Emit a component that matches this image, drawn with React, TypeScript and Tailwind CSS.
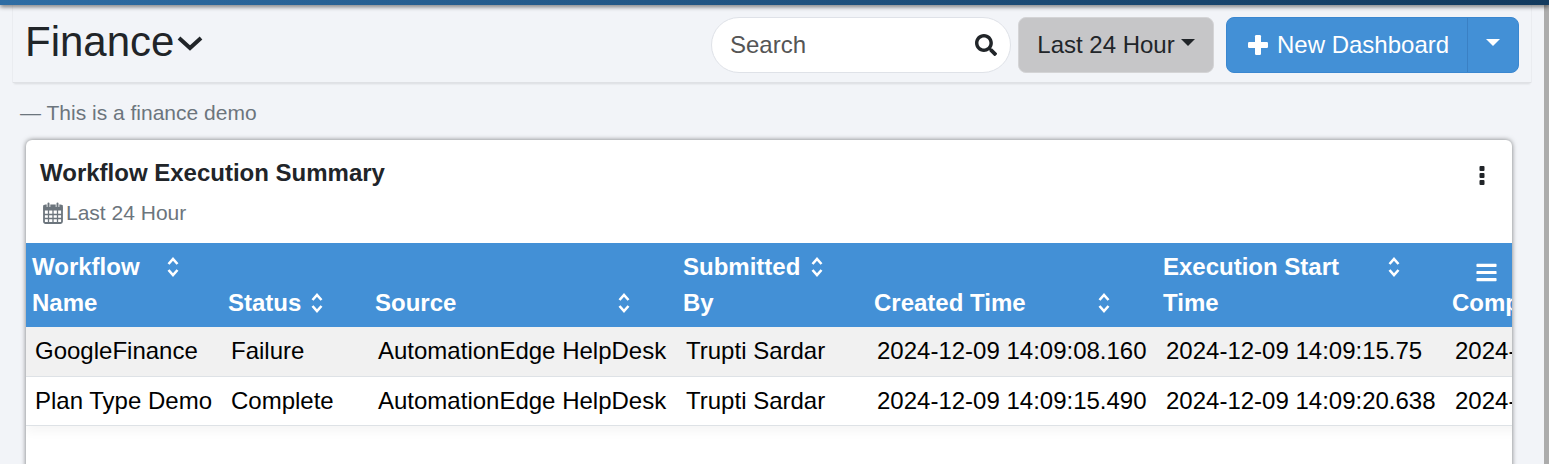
import { FaBars, FaSearch } from "react-icons/fa";

const SortIcon = () => (
  <svg viewBox="0 0 14 22" className="h-[22px] w-[14px] shrink-0" fill="none" stroke="currentColor" strokeWidth="2.6">
    <polyline points="2.5,8 7,3 11.5,8" />
    <polyline points="2.5,14 7,19 11.5,14" />
  </svg>
);

const CalendarIcon = () => (
  <svg viewBox="0 0 20 22" className="h-[22px] w-[20px] shrink-0 text-[#6c757d]" fill="none" stroke="currentColor">
    <rect x="1" y="3.5" width="18" height="17.5" rx="1.5" strokeWidth="1.8" />
    <rect x="1" y="3.5" width="18" height="4.5" fill="currentColor" strokeWidth="1" />
    <path d="M1 12.5h18M1 16.5h18M5.5 8v13M10 8v13M14.5 8v13" strokeWidth="1.3" />
    <path d="M5.5 1.5v3.5M14.5 1.5v3.5" stroke="white" strokeWidth="3.6" />
    <path d="M5.5 1.5v3.5M14.5 1.5v3.5" strokeWidth="2" strokeLinecap="round" />
  </svg>
);

const KebabIcon = () => (
  <svg viewBox="0 0 6 19" className="mt-[8px] h-[19px] w-[6px]" fill="#212529">
    <rect x="0.5" y="0" width="5" height="5" rx="1" />
    <rect x="0.5" y="7" width="5" height="5" rx="1" />
    <rect x="0.5" y="14" width="5" height="5" rx="1" />
  </svg>
);

const PlusIcon = () => (
  <svg viewBox="0 0 20 20" className="h-[20px] w-[20px] shrink-0" fill="currentColor">
    <rect x="7" y="0" width="6" height="20" rx="1.2" />
    <rect x="0" y="7" width="20" height="6" rx="1.2" />
  </svg>
);

const Caret = () => (
  <span className="h-0 w-0 border-x-[7px] border-t-[7px] border-x-transparent border-t-current" />
);

const HeadCell = ({ label, iconLeft, topIcon }: { label: string[]; iconLeft: string; topIcon?: boolean }) => (
  <th className="h-[84px] px-[6px] pb-[6px] align-bottom text-left font-bold text-white">
    {label.length > 1 ? (
      <div className="leading-[36px]">
        <div className="flex items-center">
          <span className={iconLeft}>{label[0]}</span>
          {topIcon && <SortIcon />}
        </div>
        <div>{label[1]}</div>
      </div>
    ) : (
      <div className="flex items-center leading-[36px]">
        <span className={iconLeft}>{label[0]}</span>
        <SortIcon />
      </div>
    )}
  </th>
);

const rows = [
  ["GoogleFinance", "Failure", "AutomationEdge HelpDesk", "Trupti Sardar", "2024-12-09 14:09:08.160", "2024-12-09 14:09:15.75", "2024-12-09 14:09:20.100"],
  ["Plan Type Demo", "Complete", "AutomationEdge HelpDesk", "Trupti Sardar", "2024-12-09 14:09:15.490", "2024-12-09 14:09:20.638", "2024-12-09 14:09:25.200"],
];

export default function App() {
  return (
    <div className="h-[464px] w-[1549px] overflow-hidden bg-[#f2f4f8] font-['Liberation_Sans',Arial,sans-serif] text-[#212529]">
      <div className="relative z-10 h-[5px] bg-gradient-to-r from-[#2e6da4] to-[#123a5e] shadow-[0_2px_4px_rgba(0,0,0,0.5)]" />

      <div className="flex">
        <div className="w-[1544px] shrink-0">
          <div className="mx-[13px] w-[1518px]">
            <div className="flex h-[78px] items-start justify-between border-b border-[#dfe1e5] pr-[12px] shadow-[0_2px_2px_-1px_rgba(0,0,0,0.1),-1px_0_0_#ebedf1,1px_0_0_#ebedf1]">
              <div className="mt-[12px] flex items-center pl-[12px]">
                <h1 className="text-[42px] leading-[50px]">Finance</h1>
                <svg viewBox="0 0 26 16" className="mt-[1px] ml-[3px] h-[16px] w-[26px]" fill="none" stroke="currentColor" strokeWidth="4">
                  <polyline points="2,3 13,13 24,3" />
                </svg>
              </div>

              <div className="mt-[12px] flex items-center">
                <div className="flex h-[56px] w-[300px] items-center justify-between rounded-[28px] border border-[#dfe2e8] bg-white pr-[13px] pl-[18px]">
                  <span className="text-[24px] text-[#555]">Search</span>
                  <FaSearch className="text-[22px] text-[#212529]" />
                </div>
                <button className="ml-[7px] flex h-[56px] w-[196px] items-center justify-center gap-[6px] rounded-[8px] border border-[#d4d4d6] bg-[#c6c6c8] text-[24px]">
                  Last 24 Hour
                  <span className="mb-[6px] flex"><Caret /></span>
                </button>
                <div className="ml-[12px] flex h-[56px] w-[293px] overflow-hidden rounded-[8px] border border-[#3a87d0] bg-[#4390d6] text-white">
                  <div className="flex w-[240px] items-center gap-[9px] pl-[21px] text-[24px]">
                    <PlusIcon />
                    New Dashboard
                  </div>
                  <div className="flex flex-1 items-center justify-center border-l border-[#3a80c4]">
                    <span className="mb-[6px] flex"><Caret /></span>
                  </div>
                </div>
              </div>
            </div>

            <p className="mt-[17px] ml-[7px] text-[21px] leading-[26px] text-[#6c757d]">— This is a finance demo</p>
          </div>

          <div className="mt-[14px] ml-[26px] h-[340px] w-[1486px] overflow-hidden rounded-t-[6px] bg-white shadow-[0_0_5px_rgba(0,0,0,0.5)]">
            <div className="flex h-[103px] justify-between pt-[18px] pr-[27px] pl-[14px]">
              <div>
                <h2 className="text-[24px] leading-[30px] font-bold">Workflow Execution Summary</h2>
                <div className="mt-[13px] flex items-center gap-[3px] pl-[3px] text-[21px] leading-[24px] text-[#6c757d]">
                  <CalendarIcon />
                  Last 24 Hour
                </div>
              </div>
              <KebabIcon />
            </div>

            <div className="relative h-[240px] overflow-hidden">
              <table className="w-[1640px] table-fixed border-collapse text-[24px] shadow-[0_6px_10px_rgba(0,0,0,0.04)]">
                <colgroup>
                  <col className="w-[196px]" />
                  <col className="w-[147px]" />
                  <col className="w-[308px]" />
                  <col className="w-[191px]" />
                  <col className="w-[289px]" />
                  <col className="w-[289px]" />
                  <col className="w-[220px]" />
                </colgroup>
                <thead className="bg-[#4390d6]">
                  <tr>
                    <HeadCell label={["Workflow", "Name"]} iconLeft="w-[134px]" topIcon />
                    <HeadCell label={["Status"]} iconLeft="w-[82px]" />
                    <HeadCell label={["Source"]} iconLeft="w-[242px]" />
                    <HeadCell label={["Submitted", "By"]} iconLeft="w-[127px]" topIcon />
                    <HeadCell label={["Created Time"]} iconLeft="w-[223px]" />
                    <HeadCell label={["Execution Start", "Time"]} iconLeft="w-[224px]" topIcon />
                    <th className="h-[84px] px-[6px] pb-[6px] align-bottom text-left font-bold whitespace-nowrap text-white">
                      <div className="leading-[36px]">Completed Time</div>
                    </th>
                  </tr>
                </thead>
                <tbody className="text-black">
                  {rows.map((row, i) => (
                    <tr key={row[0]} className={`h-[49px] border-b border-[#dee2e6] ${i === 0 ? "bg-[#f1f1f1]" : "bg-white"}`}>
                      {row.map((cell, j) => (
                        <td key={j} className="px-[9px] whitespace-nowrap">{cell}</td>
                      ))}
                    </tr>
                  ))}
                </tbody>
              </table>
              <FaBars className="absolute top-[18px] left-[1449px] text-[23px] text-white" />
            </div>
          </div>
        </div>
        <div className="h-[459px] flex-1 bg-[#acacac]" />
      </div>
    </div>
  );
}
